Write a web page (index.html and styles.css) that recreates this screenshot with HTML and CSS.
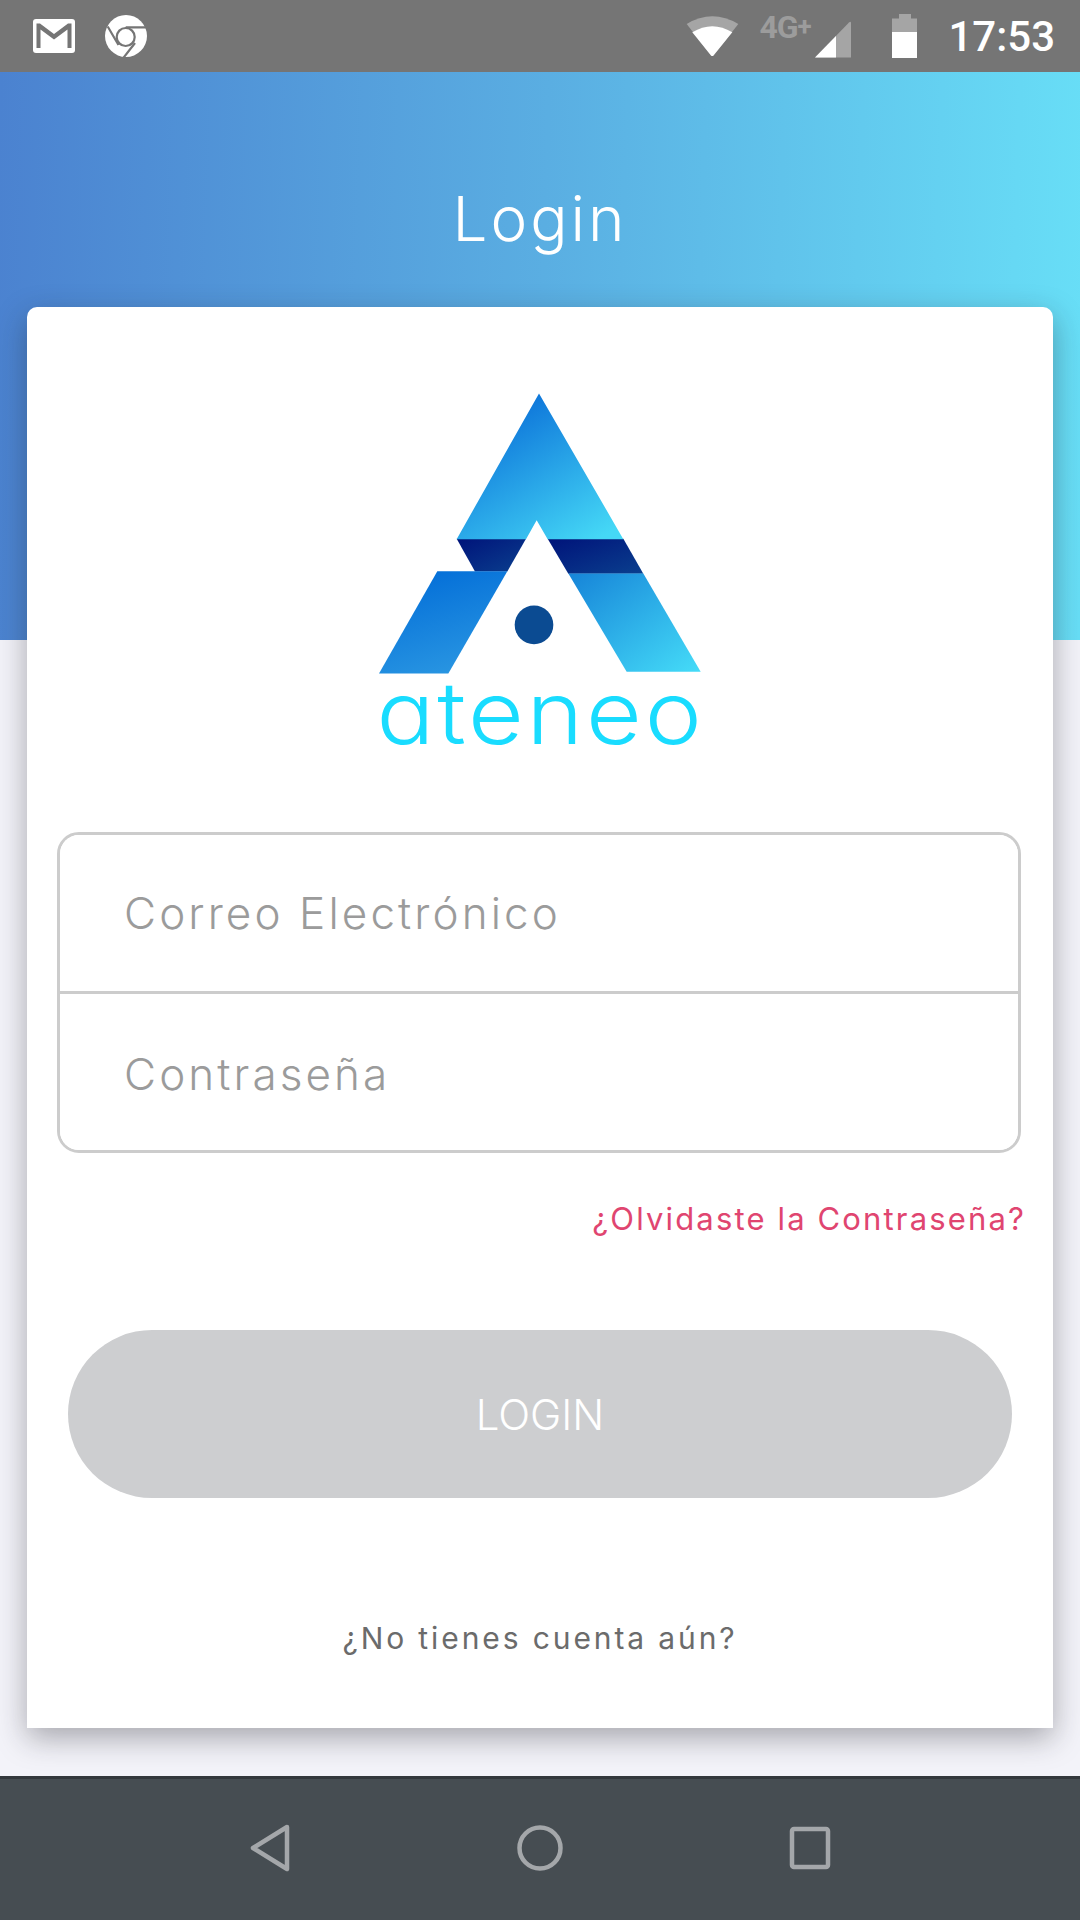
FILE: index.html
```html
<!DOCTYPE html>
<html lang="es">
    <head>
        <meta charset="UTF-8" />
        <meta name="viewport" content="width=device-width, initial-scale=1.0" />
        <title>Login</title>
        <link rel="stylesheet" href="styles.css">
    </head>
    <body>
        <div class="status-bar">
            <div class="status-left">
                <svg class="icon-gmail" viewBox="0 0 42 34">
                    <rect width="42" height="34" rx="3" fill="#fff" />
                    <path d="M3.5 4.5H7L21 15 35 4.5H38.5V29H34.5V10.5L21 20.5 7.5 10.5V29H3.5Z" fill="#757575" />
                </svg>
                <svg class="icon-chrome" viewBox="0 0 42 42">
                    <circle cx="21" cy="21" r="21" fill="#fff" />
                    <g fill="none" stroke="#757575" stroke-width="2.2">
                        <circle cx="20.7" cy="22" r="9" />
                        <path d="M20.7 12.3H41M2.7 11.5 13.5 30M30 28 18.3 43" />
                    </g>
                </svg>
            </div>
            <div class="status-right">
                <svg class="icon-wifi" viewBox="0 0 54 41">
                    <path d="M.7 8Q26.3-7.4 52.3 8L27.5 39.5Q26.3 40.6 25 39.5Z" fill="#a5a5a5" />
                    <path d="M6.3 16.3Q26.3 4.3 46.3 16.3L27.5 39.5Q26.3 40.6 25 39.5Z" fill="#fff" />
                </svg>
                <div class="network">
                    <span class="network-type">4G<sup>+</sup></span>
                    <svg class="icon-signal" viewBox="0 0 36 37">
                        <path d="M0 36.5 34 1.5Q36 0 36 2V36.5Z" fill="#a5a5a5" />
                        <path d="M0 36.5 21 15V36.5Z" fill="#fff" />
                    </svg>
                </div>
                <svg class="icon-battery" viewBox="0 0 25 44">
                    <path d="M7 0H19V4.5H25V18H0V4.5H7Z" fill="#a5a5a5" />
                    <rect y="18" width="25" height="26" fill="#fff" />
                </svg>
                <span class="clock">17:53</span>
            </div>
        </div>

        <div class="page">
            <div class="header">
                <h1 class="title">Login</h1>
            </div>
            <div class="card">
                <div class="logo">
                    <svg class="logo-mark" viewBox="0 0 1200 920">
                        <defs>
                            <linearGradient id="topGrad" x1="0.2" y1="0.1" x2="0.85" y2="1">
                                <stop offset="0" stop-color="#0a6fd8" />
                                <stop offset="1" stop-color="#45d8f6" />
                            </linearGradient>
                            <linearGradient id="rightGrad" x1="0" y1="0" x2="1" y2="1">
                                <stop offset="0" stop-color="#1684d8" />
                                <stop offset="1" stop-color="#45dcf8" />
                            </linearGradient>
                            <linearGradient id="leftGrad" x1="0.3" y1="0" x2="0.7" y2="1">
                                <stop offset="0" stop-color="#036ed8" />
                                <stop offset="1" stop-color="#2a97e2" />
                            </linearGradient>
                            <linearGradient id="bandGrad" x1="0" y1="0" x2="1" y2="1">
                                <stop offset="0" stop-color="#00137a" />
                                <stop offset="1" stop-color="#0a3f8e" />
                            </linearGradient>
                        </defs>
                        <path d="M350 506H558L502 604H405Z" fill="url(#bandGrad)" />
                        <path d="M623 506H850L910 611H685Z" fill="url(#bandGrad)" />
                        <path d="M597 70 850 507H623L590 450 558 507H350Z" fill="url(#topGrad)" />
                        <path d="M685 610H910L1082 905H860Z" fill="url(#rightGrad)" />
                        <path d="M292 603H502L325 910H117Z" fill="url(#leftGrad)" />
                        <circle cx="582" cy="764" r="58" fill="#0b4b92" />
                    </svg>
                    <span class="logo-name">ateneo</span>
                </div>

                <form class="login-form">
                    <div class="fields">
                        <input class="field" type="text" placeholder="Correo Electrónico" />
                        <input class="field" type="password" placeholder="Contraseña" />
                    </div>
                    <a class="forgot" href="#">¿Olvidaste la Contraseña?</a>
                    <button class="submit" type="button" disabled>LOGIN</button>
                </form>
                <p class="signup">¿No tienes cuenta aún?</p>
            </div>
        </div>

        <div class="nav-bar">
            <div class="nav-item">
                <svg width="42" height="50" viewBox="0 0 42 50">
                    <path d="M38 4 4 25 38 46Z" fill="none" stroke="#a4a7aa" stroke-width="4.5" stroke-linejoin="round" />
                </svg>
            </div>
            <div class="nav-item">
                <svg width="48" height="50" viewBox="0 0 48 50">
                    <circle cx="24" cy="25" r="20.5" fill="none" stroke="#a4a7aa" stroke-width="4.5" />
                </svg>
            </div>
            <div class="nav-item">
                <svg width="42" height="44" viewBox="0 0 42 44">
                    <rect x="3" y="3" width="36" height="38" rx="2" fill="none" stroke="#a4a7aa" stroke-width="4.5" />
                </svg>
            </div>
        </div>
    </body>
</html>
```

FILE: styles.css
```css
* {
    box-sizing: border-box;
}
html,
body {
    margin: 0;
    padding: 0;
}
body {
    width: 1080px;
    height: 1920px;
    display: flex;
    flex-direction: column;
    overflow: hidden;
    font-family: "Inter", "Lato", sans-serif;
    background: #f3f3f9;
}

/* status bar */
.status-bar {
    height: 72px;
    flex: none;
    display: flex;
    align-items: center;
    justify-content: space-between;
    padding: 0 25px 0 33px;
    background: #757575;
}
.status-left,
.status-right {
    display: flex;
    align-items: center;
}
.icon-gmail {
    width: 42px;
    height: 34px;
}
.icon-chrome {
    width: 42px;
    height: 42px;
    margin-left: 30px;
}
.icon-wifi {
    width: 54px;
    height: 41px;
}
.network {
    display: flex;
    align-items: flex-start;
    height: 44px;
    margin-left: 19px;
}
.network-type {
    width: 56px;
    font-family: "Roboto", sans-serif;
    font-size: 32px;
    font-weight: 700;
    line-height: 26px;
    letter-spacing: -1px;
    color: #9c9c9c;
}
.network-type sup {
    font-size: 26px;
    line-height: 0;
    vertical-align: 3px;
}
.icon-signal {
    width: 36px;
    height: 37px;
    margin-top: 7px;
}
.icon-battery {
    width: 25px;
    height: 44px;
    margin-left: 41px;
}
.clock {
    margin-left: 31px;
    font-family: "Roboto", sans-serif;
    font-size: 42px;
    font-weight: 500;
    color: #fff;
}

/* main */
.page {
    flex: 1;
}
.header {
    height: 568px;
    padding-top: 109px;
    background: linear-gradient(92deg, #4b82d0, #5aaee2 50%, #68dff7);
}
.title {
    margin: 0;
    text-align: center;
    font-size: 62px;
    font-weight: 300;
    line-height: 76px;
    letter-spacing: 3px;
    color: #fff;
}
.card {
    height: 1421px;
    margin: -333px 27px 0;
    padding-top: 63px;
    border-radius: 10px 10px 0 0;
    background: #fff;
    box-shadow: 0 10px 30px rgba(30, 30, 40, 0.36);
}
.logo {
    display: flex;
    flex-direction: column;
    align-items: center;
    height: 399px;
}
.logo-mark {
    width: 400px;
    height: 307px;
    flex: none;
}
.logo-name {
    margin-top: -10px;
    font-size: 86px;
    font-weight: 300;
    line-height: 92px;
    letter-spacing: 2.5px;
    font-feature-settings: "cv11";
    transform: scaleX(1.12);
    color: #19dcff;
}
.login-form {
    padding: 0 32px 0 30px;
    margin-top: 63px;
}
.fields {
    display: flex;
    flex-direction: column;
    border: 3px solid #ccc;
    border-radius: 22px;
    overflow: hidden;
}
.field {
    height: 156px;
    padding: 0 0 0 64px;
    border: none;
    outline: none;
    background: #fff;
    font-family: inherit;
    font-size: 44px;
    font-weight: 300;
    letter-spacing: 3.1px;
}
.field::placeholder {
    color: #9b9b9b;
    opacity: 1;
}
.field + .field {
    height: 159px;
    padding-top: 3px;
    border-top: 3px solid #ccc;
}
.forgot {
    display: block;
    margin: 46px -5px 0 0;
    text-align: right;
    font-size: 31px;
    line-height: 40px;
    letter-spacing: 2.15px;
    color: #e04570;
    text-decoration: none;
}
.submit {
    display: block;
    width: 944px;
    height: 168px;
    margin: 91px 0 0 11px;
    border: none;
    border-radius: 84px;
    background: #cdced0;
    font-family: inherit;
    font-size: 42px;
    font-weight: 300;
    color: #fff;
}
.signup {
    margin: 120px 0 0;
    text-align: center;
    font-size: 30px;
    line-height: 40px;
    letter-spacing: 2.9px;
    color: #6b6b6b;
}

/* navigation */
.nav-bar {
    height: 144px;
    flex: none;
    display: flex;
    justify-content: center;
    align-items: center;
    padding-bottom: 3px;
    border-top: 3px solid #33383d;
    background: #464d52;
}
.nav-item {
    width: 270px;
    display: flex;
    justify-content: center;
}
```
